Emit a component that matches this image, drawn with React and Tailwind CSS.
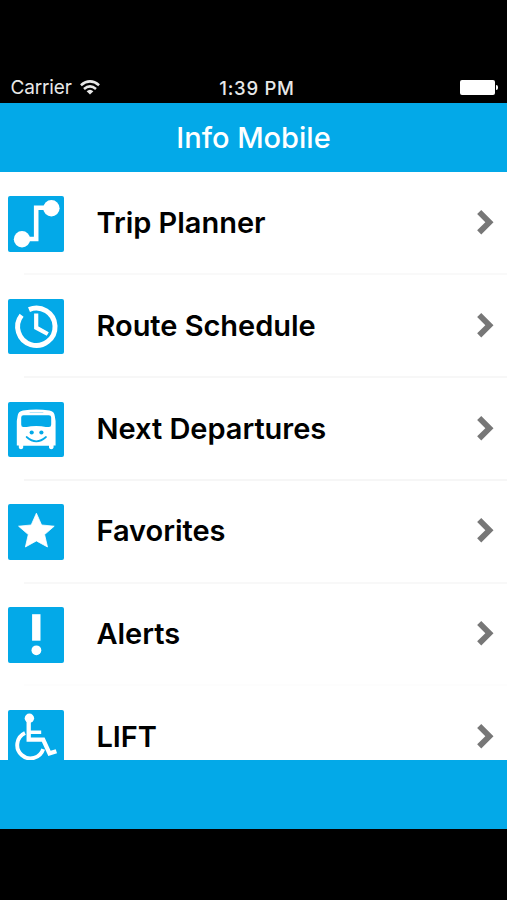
const TripIcon = () => (
  <>
    <path d="M43 11.8H28.2V43H14" fill="none" stroke="white" strokeWidth="4.6" />
    <circle cx="43.4" cy="12.3" r="8.2" />
    <circle cx="14" cy="43.3" r="8.2" />
  </>
);

const ClockIcon = () => (
  <g fill="none" stroke="white">
    <path d="M21 10.6A18.7 18.7 0 1 1 13.6 16.3" strokeWidth="5" />
    <path d="M28.2 14.4V28.7L39.8 35" strokeWidth="4.2" />
  </g>
);

const BusIcon = () => (
  <>
    <path d="M15 8.4Q28.2 6.8 41.5 8.4Q46.4 9.2 46.8 14L47.6 19V43.5H45.6V45.5Q45.4 47.3 43.3 47.3Q41.3 47.3 41 45.5V43.8H15.2V45.5Q15 47.3 13 47.3Q11 47.3 10.8 45.5V43.5H8.8V19L9.6 14Q10 9.2 15 8.4Z" />
    <g className="fill-[#03a9e8]">
      <path d="M15.5 13.2H40.8Q43.2 13.2 43.2 15.5V22.5Q43.2 25 41 25H37.8Q34 24 28.2 24Q22.5 24 18.7 25H15.3Q13.2 25 13.2 22.5V15.5Q13.2 13.2 15.5 13.2Z" />
      <rect x="21.5" y="10" width="14" height="0.7" rx="0.35" opacity="0.4" />
      <circle cx="23.7" cy="30.5" r="2.1" />
      <circle cx="33.4" cy="30.5" r="2.1" />
    </g>
    <path d="M18.6 35Q28.3 43.6 38 35" fill="none" className="stroke-[#03a9e8]" strokeWidth="1.7" strokeLinecap="round" />
  </>
);

const StarIcon = () => (
  <path
    d="M28.4 9.2L33.6 21L46.2 22.2L36.6 30.6L39.5 43L28.4 36.9L17.4 43L20.3 30.6L10.6 22.2L23.2 21Z"
    stroke="white"
    strokeWidth="0.8"
  />
);

const AlertIcon = () => (
  <>
    <rect x="24.1" y="7.2" width="8.4" height="26.5" />
    <circle cx="28.4" cy="43.3" r="4.9" />
  </>
);

const LiftIcon = () => (
  <>
    <circle cx="21.4" cy="8.3" r="4.7" />
    <g fill="none" stroke="white" strokeWidth="3.5">
      <path d="M20.7 10V29.6H35.2L41.5 43.4L48.4 41.2" strokeWidth="4.3" />
      <path d="M20.7 22.3H33.2" />
      <path d="M17 23A13.3 13.3 0 1 0 35.2 39.2" strokeWidth="3.9" />
    </g>
  </>
);

const menuItems = [
  { label: 'Trip Planner', Icon: TripIcon, divider: 'bg-[#f9f9f9]' },
  { label: 'Route Schedule', Icon: ClockIcon, divider: 'bg-[#f7f7f7]' },
  { label: 'Next Departures', Icon: BusIcon, divider: 'bg-[#f6f6f6]' },
  { label: 'Favorites', Icon: StarIcon, divider: 'bg-[#f8f8f8]' },
  { label: 'Alerts', Icon: AlertIcon, divider: 'bg-[#fdfdfd]' },
  { label: 'LIFT', Icon: LiftIcon, divider: 'bg-[#f8f8f8]' }
];

const StatusBar = () => (
  <div className="grid h-[102.5px] grid-cols-3 items-end bg-black pb-[4px] text-[#e8e8e8]">
    <div className="flex items-center pl-[10.5px]">
      <span className="pt-px text-[19px] leading-[22px] tracking-[-0.15px]">Carrier</span>
      <svg className="ml-[8px] h-[15px] w-[20px]" viewBox="0 0 20 15" fill="none" stroke="currentColor" strokeWidth="2.6">
        <path d="M0.9 5.2Q10 -2.4 19.1 5.2" />
        <path d="M4 8.9Q10 3.9 16 8.9" />
        <path d="M10 14.6L6.6 11.3Q10 8.2 13.4 11.3Z" fill="currentColor" stroke="none" />
      </svg>
    </div>
    <div className="pl-[7px] text-center text-[18.5px] leading-[22px] font-medium tracking-[0.75px] whitespace-nowrap">1:39 PM</div>
    <div className="flex h-[22px] items-center justify-end pr-[9.5px]">
      <div className="h-[15px] w-[35px] rounded-[2px] bg-white"></div>
      <div className="ml-[0.5px] h-[5px] w-[2px] rounded-r-full bg-white"></div>
    </div>
  </div>
);

const MenuRow = ({ label, Icon, divider }) => (
  <div className="flex h-[102.75px] shrink-0 flex-col">
    <div className="flex flex-1 items-center pt-[2px] pr-[13px] pl-[8.3px]">
      <svg className="h-[55.7px] w-[55.7px] rounded-[2px] bg-[#03a9e8] fill-white" viewBox="0 0 55.7 55.7">
        <Icon />
      </svg>
      <span className="mb-[1.5px] ml-[32.5px] flex-1 text-[29px] leading-[36px] font-semibold tracking-[-0.03px] whitespace-nowrap text-black">
        {label}
      </span>
      <svg className="mb-[1.5px] h-[28px] w-[18px]" viewBox="0 0 18 28" fill="none" stroke="#777777" strokeWidth="5.8">
        <path d="M3.2 3L13.4 13.2L3.2 23.4" />
      </svg>
    </div>
    <div className={`ml-6 h-[2px] ${divider}`}></div>
  </div>
);

const App = () => {
  return (
    <div className="flex h-[900px] w-[507px] flex-col overflow-hidden bg-black font-['Inter','Liberation_Sans',sans-serif]">
      <StatusBar />
      <header className="flex h-[69.5px] items-center justify-center bg-[#03a9e8] pt-[2px]">
        <h1 className="text-[29px] leading-[36px] font-[550] text-white">Info Mobile</h1>
      </header>
      {/* Menu list, the last row is cut off by the footer */}
      <main className="flex h-[588.3px] flex-col overflow-hidden bg-white pt-[0.5px]">
        {menuItems.map((item) => (
          <MenuRow key={item.label} {...item} />
        ))}
      </main>
      <footer className="h-[69px] bg-[#03a9e8]"></footer>
    </div>
  );
};

export default App;
